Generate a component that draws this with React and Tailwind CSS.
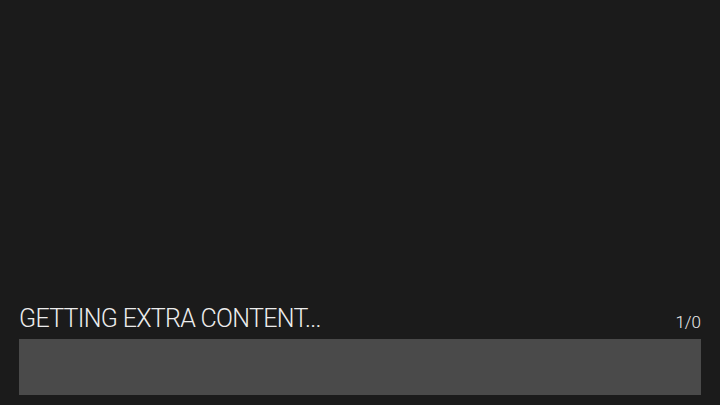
export default function App() {
  return (
    <div className="w-[720px] h-[405px] bg-[#1b1b1b] flex flex-col justify-end px-[19px] pb-[10px]" style={{ fontFamily: "Roboto, 'Open Sans', sans-serif" }}>
      <div className="flex items-end justify-between text-[#ececec] leading-none">
        <span className="text-[25px] font-light tracking-[-0.7px] leading-none">GETTING EXTRA CONTENT...</span>
        <span className="text-[17px] font-light leading-none">1/0</span>
      </div>
      <div className="mt-[8px] h-[56px] bg-[#4a4a4a]"></div>
    </div>
  );
}
